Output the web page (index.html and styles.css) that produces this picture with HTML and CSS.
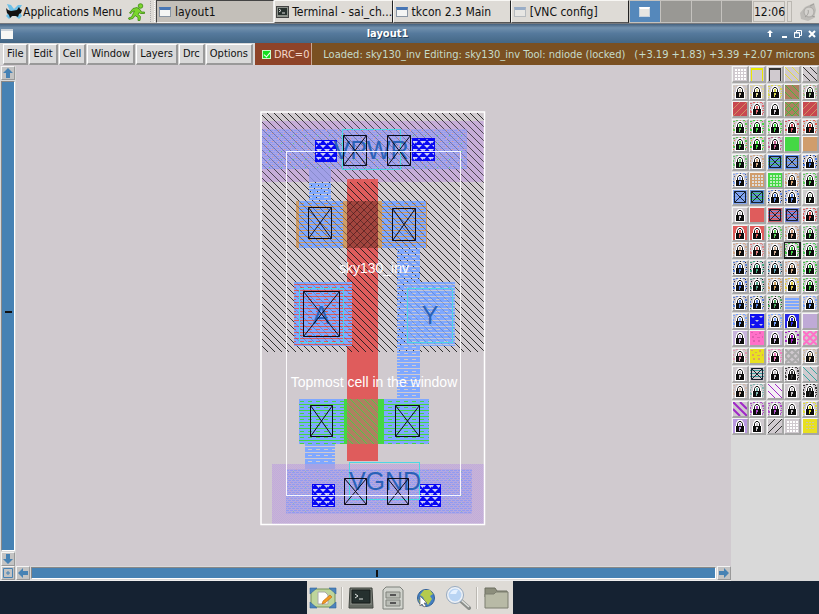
FILE: index.html
```html
<!DOCTYPE html>
<html lang="en">
<head>
<meta charset="utf-8">
<meta name="viewport" content="width=device-width, initial-scale=1">
<title>layout1</title>
<link rel="stylesheet" href="styles.css">
</head>
<body>
<header class="panel">
  <button class="apps" type="button">
    <svg class="apps-icon" viewBox="0 0 18 17" aria-hidden="true">
      <path d="M2 1l4 1 3 4 4-4 4 0-3 5 3 6-3 3-5-4-5 4-3-3 4-5z" fill="#6cc0e8"/>
      <path d="M1 5l2 2 3 1 6-1 2-3 1 2 2 1-1 3-2 1-1 3-2-1-4 0-2 2-1-3-2-2z" fill="#111"/>
    </svg>
    Applications Menu
  </button>
  <button class="runner" type="button" aria-label="Log out">
    <svg viewBox="0 0 18 18" aria-hidden="true">
      <circle cx="12.500" cy="3" r="2.300" fill="#7bd62c" stroke="#3d8a12" stroke-width=".8"/>
      <path d="M5 5.500l4-1 3 2 1.500 2.500 3 0v1.500l-4 0-1.500-1-1 2 2.500 2-.5 4h-2l0-3-3-2-2 3-4 1-.5-1.500 3-1 3-6-2 .5-1.500 2-1.500-.5z" fill="#7bd62c" stroke="#3d8a12" stroke-width=".8"/>
    </svg>
  </button>
  <span class="grip"></span>
  <nav class="tasks" aria-label="Windows">
    <button class="task task-active" type="button"><span class="win-icon"></span>layout1</button>
    <button class="task" type="button">
      <svg class="term-icon" viewBox="0 0 13 12" aria-hidden="true"><rect x=".5" y=".5" width="12" height="11" fill="#8c918a" stroke="#444"/><rect x="2" y="2" width="9" height="7" fill="#27302d"/><path d="M3 3l2 1.500-2 1.500M6 7h3" stroke="#ddd" fill="none"/></svg>
      Terminal - sai_ch...</button>
    <button class="task" type="button"><span class="win-icon"></span>tkcon 2.3 Main</button>
    <button class="task" type="button"><span class="win-icon win-faded"></span>[VNC config]</button>
  </nav>
  <div class="pager">
    <button class="desk desk-on" type="button" aria-label="Workspace 1"><span class="mini"></span></button>
    <button class="desk" type="button" aria-label="Workspace 2"></button>
    <button class="desk" type="button" aria-label="Workspace 3"></button>
    <button class="desk" type="button" aria-label="Workspace 4"></button>
  </div>
  <time class="clock">12:06</time>
  <span class="grip grip-end"></span>
  <svg class="tray" viewBox="0 0 20 20" aria-hidden="true">
    <path d="M2 11l5-6 9-4 2 7-2 8-6 3-7-2z" fill="#bebcb8"/>
    <circle cx="11" cy="10" r="5" fill="#d4d2ce" stroke="#aaa8a4"/><path d="M7 15c3-2 4-5 3-7M12 4l4-2M14 14l3 1" stroke="#9e9c99" fill="none"/>
  </svg>
</header>

<div class="titlebar">
  <span class="title-icon"></span>
  <h1 class="title">layout1</h1>
  <div class="win-buttons">
    <button type="button" aria-label="Shade"><svg viewBox="0 0 10 10"><path d="M5 1l3 3H6v4H4V4H2z" fill="#fff"/></svg></button>
    <button type="button" aria-label="Minimize"><svg viewBox="0 0 10 10"><path d="M3 7h5v2H3z" fill="#fff"/></svg></button>
    <button type="button" aria-label="Restore"><svg viewBox="0 0 10 10"><path d="M3.500 3V1.500h5v5H7M1.500 3.500h5v5h-5zM1 4h6" stroke="#fff" fill="none"/></svg></button>
    <button type="button" aria-label="Close"><svg viewBox="0 0 10 10"><path d="M2 2l6 6M8 2l-6 6" stroke="#fff" stroke-width="2"/></svg></button>
  </div>
</div>

<div class="menubar">
  <nav class="menus">
    <button type="button">File</button>
    <button type="button">Edit</button>
    <button type="button">Cell</button>
    <button type="button">Window</button>
    <button type="button">Layers</button>
    <button type="button">Drc</button>
    <button type="button">Options</button>
  </nav>
  <label class="drc"><input class="drc-box" type="checkbox" checked>DRC=0</label>
  <div class="status">
    <span>Loaded: sky130_inv Editing: sky130_inv Tool: ndiode (locked)</span>
    <span>(+3.19 +1.83) +3.39 +2.07 microns</span>
  </div>
</div>

<main class="work">
  <div class="vscroll">
    <button class="arrow" type="button" aria-label="Scroll up"><svg viewBox="0 0 12 12"><path d="M6 1l5 5H8v5H4V6H1z"/></svg></button>
    <div class="bar bar-v"><span class="tick tick-h"></span></div>
    <button class="arrow" type="button" aria-label="Scroll down"><svg viewBox="0 0 12 12"><path d="M6 11l5-5H8V1H4v5H1z"/></svg></button>
  </div>

  <svg class="layout" viewBox="16 66 715 500" role="img" aria-label="Inverter cell layout">
    <defs>
      <pattern id="well" width="7" height="7" patternUnits="userSpaceOnUse"><path d="M-1-1l9 9M-1 6l2 2M6-1l2 2" stroke="#1c1c1c" stroke-width=".9"/></pattern>
      <pattern id="back" width="7" height="7" patternUnits="userSpaceOnUse"><path d="M-1 8l9-9M-1 1l2-2M6 8l2-2" stroke="#6a2222"/></pattern>
      <pattern id="greenhatch" width="7" height="7" patternUnits="userSpaceOnUse"><path d="M-1-1l9 9M-1 6l2 2M6-1l2 2" stroke="#45d045" stroke-width=".9"/></pattern>
      <pattern id="li" width="8" height="6" patternUnits="userSpaceOnUse"><path d="M0 0h8v2h-3v1h3v2H4v1H0V5h0V3h5V2H0zM0 3h8v2H0z" fill="#7fa8ff"/></pattern>
      <pattern id="rail" width="4" height="4" patternUnits="userSpaceOnUse"><path d="M0 .5h3M2 2.500h2M0 2.500h1" stroke="#7d93fb"/></pattern>
      <pattern id="metal" width="2" height="2" patternUnits="userSpaceOnUse"><path d="M0 0h1v1H0zM1 1h1v1H1z" fill="#b78ee0"/></pattern>
      <pattern id="specks" width="12" height="8" patternUnits="userSpaceOnUse"><path d="M2 2h1v1H2zM8 5h1v1H8z" fill="#e49a90"/><path d="M5 7h1v1H5z" fill="#62cc74"/></pattern>
      <pattern id="via" width="8" height="8" patternUnits="userSpaceOnUse"><rect width="8" height="8" fill="#0808f4"/><path d="M0 1h6L3 4zM4 5h5L6.500 8zM-1 5h3l-2.500 3z" fill="#d0d0f4"/></pattern>
    </defs>

    <!-- n-well and power rail -->
    <rect x="262" y="121" width="222" height="61" fill="#bf98e0" opacity=".55"/>
    <rect x="262" y="129" width="205" height="40" fill="#9ba0ef" opacity=".6"/>
    <rect x="262" y="129" width="205" height="40" fill="url(#rail)" opacity=".6"/>
    <rect x="262" y="113" width="222" height="8" fill="url(#well)"/>
    <rect x="262" y="121" width="222" height="8" fill="url(#well)" opacity=".8"/>
    <rect x="262" y="129" width="205" height="40" fill="url(#well)" opacity=".35"/>
    <rect x="467" y="129" width="17" height="40" fill="url(#well)" opacity=".8"/>
    <rect x="262" y="169" width="222" height="13" fill="url(#well)" opacity=".8"/>
    <rect x="262" y="182" width="222" height="170" fill="url(#well)"/>
    <rect x="262" y="129" width="205" height="40" fill="url(#specks)"/>
    <rect x="309" y="182" width="22" height="19" fill="url(#li)"/>
    <rect x="309" y="169" width="22" height="13" fill="#979ceb" opacity=".8"/>

    <!-- input gate -->
    <rect x="347" y="179" width="31" height="282" fill="#df5c5c"/>
    <rect x="347" y="182" width="31" height="170" fill="url(#well)"/>

    <!-- p-diffusion -->
    <rect x="296" y="201" width="51" height="47" fill="#d09d67"/>
    <rect x="378" y="201" width="49" height="47" fill="#d09d67"/>
    <rect x="299" y="201" width="44" height="47" fill="url(#li)"/>
    <rect x="382" y="201" width="44" height="47" fill="url(#li)"/>
    <rect x="347" y="201" width="31" height="47" fill="#a2453e"/>
    <rect x="347" y="201" width="31" height="47" fill="url(#back)"/>
    <rect x="296" y="201" width="131" height="47" fill="url(#well)" opacity=".5"/>

    <!-- output strap and ports -->
    <rect x="397" y="248" width="23" height="152" fill="url(#li)"/>
    <rect x="294" y="282" width="58" height="64" fill="#df5c5c"/>
    <rect x="294" y="282" width="58" height="64" fill="url(#li)"/>
    <rect x="406" y="282" width="49" height="64" fill="#c3c6d8"/>
    <rect x="406" y="282" width="49" height="64" fill="url(#li)"/>
    <rect x="294" y="282" width="58" height="64" fill="url(#well)" opacity=".25"/>
    <rect x="397" y="248" width="58" height="98" fill="url(#well)" opacity=".2"/>

    <!-- n-diffusion -->
    <rect x="299" y="399" width="130" height="45" fill="#43d843"/>
    <rect x="299" y="399" width="45" height="45" fill="url(#li)"/>
    <rect x="384" y="399" width="45" height="45" fill="url(#li)"/>
    <rect x="347" y="399" width="31" height="45" fill="#ae8060"/>
    <rect x="347" y="399" width="31" height="45" fill="url(#greenhatch)"/>

    <!-- ground rail -->
    <rect x="305" y="444" width="30" height="20" fill="url(#li)"/>
    <rect x="272" y="464" width="212" height="60" fill="#c4b0d8" opacity=".8"/>
    <rect x="272" y="464" width="212" height="60" fill="url(#metal)" opacity=".3"/>
    <rect x="286" y="469" width="186" height="45" fill="#a6a2e6" opacity=".6"/>
    <rect x="286" y="469" width="186" height="45" fill="url(#rail)" opacity=".6"/>
    <rect x="286" y="469" width="186" height="45" fill="url(#specks)" opacity=".4"/>
    <rect x="305" y="464" width="30" height="5" fill="#979ceb" opacity=".7"/>

    <!-- metal contacts -->
    <g fill="url(#via)" stroke="#0808f4">
      <rect x="315.500" y="140.500" width="21" height="21"/>
      <rect x="412.500" y="138.500" width="22" height="22"/>
      <rect x="312.500" y="484.500" width="22" height="22"/>
      <rect x="419.500" y="484.500" width="21" height="22"/>
    </g>

    <!-- port outlines -->
    <g fill="none" stroke="#4ed6e4">
      <rect x="342.500" y="129.500" width="58" height="40"/>
      <rect x="299.500" y="288.500" width="44" height="54"/>
      <rect x="407.500" y="288.500" width="45" height="54"/>
      <rect x="349.500" y="462.500" width="70" height="37"/>
    </g>

    <g class="port-text">
      <text x="371" y="159">VPWR</text>
      <text x="321" y="324">A</text>
      <text x="430" y="324">Y</text>
      <text x="385" y="490">VGND</text>
    </g>

    <g fill="none" stroke="#0b0b18">
      <path d="M343.500 135.500h23v30h-23zl23 30m0-30l-23 30"/>
      <path d="M387.500 135.500h23v30h-23zl23 30m0-30l-23 30"/>
      <path d="M308.500 207.500h23v31h-23zl23 31m0-31l-23 31"/>
      <path d="M392.500 208.500h23v32h-23zl23 32m0-32l-23 32"/>
      <path d="M303.500 291.500h36v45h-36zl36 45m0-45l-36 45"/>
      <path d="M310.500 405.500h22v31h-22zl22 31m0-31l-22 31"/>
      <path d="M395.500 405.500h24v31h-24zl24 31m0-31l-24 31"/>
      <path d="M344.500 478.500h22v26h-22zl22 26m0-26l-22 26"/>
      <path d="M387.500 478.500h21v26h-21zl21 26m0-26l-21 26"/>
    </g>

    <rect x="286.500" y="151.500" width="174" height="344" fill="none" stroke="#fff" opacity=".9"/>
    <rect x="261" y="112" width="223.500" height="412.500" fill="none" stroke="#fff" stroke-width="1.500"/>
    <g class="cell-text">
      <text x="374" y="273">sky130_inv</text>
      <text x="374" y="387">Topmost cell in the window</text>
    </g>
  </svg>

  <aside class="side" aria-label="Layers"><div class="palette" id="palette"></div></aside>

  <div class="hscroll">
    <button class="arrow" type="button" aria-label="Fit view"><svg viewBox="0 0 12 12"><path d="M1.500 1.500h9v9h-9zM5 5h2v2H5z" class="arrow-line"/></svg></button>
    <button class="arrow" type="button" aria-label="Scroll left"><svg viewBox="0 0 12 12"><path d="M1 6l5-5v3h5v4H6v3z"/></svg></button>
    <div class="bar bar-h"><span class="tick tick-v"></span></div>
    <button class="arrow" type="button" aria-label="Scroll right"><svg viewBox="0 0 12 12"><path d="M11 6L6 1v3H1v4h5v3z"/></svg></button>
  </div>
</main>

<footer class="desktop">
  <nav class="dock" aria-label="Launchers">
    <button type="button" aria-label="Show desktop"><svg viewBox="0 0 28 24"><rect x="2" y="3" width="24" height="18" rx="3" fill="#bed59c" stroke="#75905b"/><path d="M1 2h7L1 8zM27 2h-7l7 6zM1 22h7l-7-6zM27 22h-7l7-6z" fill="#4d83bd" stroke="#31659c" stroke-width=".6"/><path d="M9 6h7l3 3v9H9z" fill="#fff" stroke="#aaa"/><path d="M14 15l7-6 2 2-7 6-3 1z" fill="#f39a20" stroke="#ba6511" stroke-width=".6"/></svg></button>
    <span class="dock-sep"></span>
    <button type="button" aria-label="Terminal"><svg viewBox="0 0 28 24"><path d="M3 2h22l1 20H2z" fill="#777c75" stroke="#3e423d"/><path d="M5 4h18v13H5z" fill="#26312f" stroke="#161c1a"/><path d="M8 8l3 2-3 2M12 13h4" fill="none" stroke="#e2e6e2"/><path d="M3 20h22" stroke="#555a53"/></svg></button>
    <button type="button" aria-label="File manager"><svg viewBox="0 0 28 24"><path d="M7 1h14l3 3v19H4V4z" fill="#d2d4ce" stroke="#7d807a"/><path d="M7 6h14v6H7zM7 14h14v6H7z" fill="#babdb6" stroke="#80837c"/><path d="M11 9h6M11 17h6" stroke="#555" stroke-width="2"/></svg></button>
    <button type="button" aria-label="Web browser"><svg viewBox="0 0 28 24"><circle cx="14" cy="12" r="8.500" fill="#4380c4" stroke="#315f94"/><path d="M12 4l6 0 3 4-3 2 2 3-4 6-3-4-2-4-3-2zM6 13l4 3-1 3z" fill="#b4cb4d"/><path d="M8 10v10l2-2 2 3 2-1-2-3h3z" fill="#fff" stroke="#666" stroke-width=".7"/></svg></button>
    <button type="button" aria-label="Search"><svg viewBox="0 0 28 24"><path d="M16 14l9 8" stroke="#8b8e8a" stroke-width="4" stroke-linecap="round"/><path d="M17 14l8 7" stroke="#e0e2df" stroke-width="1.500"/><circle cx="11" cy="9" r="7.500" fill="#b9d4f3" stroke="#eef1f5" stroke-width="2"/><circle cx="11" cy="9" r="8.500" fill="none" stroke="#8199b5" stroke-width=".8"/><path d="M6 8c1-4 5-5 8-4l-2 4z" fill="#e5f1ff"/></svg></button>
    <span class="dock-sep"></span>
    <button type="button" aria-label="Home folder"><svg viewBox="0 0 28 24"><path d="M3 2h10l2 3h10v6H3z" fill="#8c8e7c" stroke="#6c6e60"/><path d="M3 8h9l2-2h12v16H3z" fill="#b8baa6" stroke="#7d7f70"/></svg></button>
  </nav>
</footer>
<script src="palette.js"></script>
</body>
</html>
```
FILE: styles.css
```css
* { box-sizing: border-box; }

body {
  margin: 0;
  height: 100vh;
  display: flex;
  flex-direction: column;
  overflow: hidden;
  background: #152232;
  color: #111;
  font: 12px/16px "DejaVu Sans Condensed", "DejaVu Sans", sans-serif;
}

button {
  margin: 0;
  padding: 0;
  border: 0;
  background: none;
  color: inherit;
  font: inherit;
}

svg { display: block; }

/* top panel */
.panel {
  flex: none;
  display: flex;
  align-items: stretch;
  height: 24px;
  background: #dedbd6;
  border-bottom: 1px solid #77797d;
}
.apps { display: flex; align-items: center; width: 126px; padding-left: 5px; white-space: nowrap; }
.apps-icon { flex: none; width: 18px; height: 17px; }
.runner { display: flex; align-items: center; width: 24px; padding-left: 2px; }
.runner svg { width: 18px; height: 18px; }
.grip { width: 5px; margin: 1px 1px 1px 0; border-left: 1px dotted #aaa; border-right: 1px dotted #fff; }
.tasks { flex: 1; display: flex; min-width: 0; }
.task {
  flex: 1;
  min-width: 0;
  display: flex;
  align-items: center;
  gap: 3px;
  padding-left: 1px;
  overflow: hidden;
  white-space: nowrap;
  border: 1px solid #f8f7f4;
  border-right-color: #222;
  border-bottom-color: #555;
  background: #dedbd6;
}
.task-active { background: #c3bfb9; border-color: #444 #eee #eee #444; }
.win-icon { flex: none; width: 12px; height: 10px; margin: 0 1px; background: #f4f5f4; border: 1px solid #8a96a4; border-top: 3px solid #4776b5; }
.win-faded { opacity: .45; }
.term-icon { flex: none; width: 13px; height: 12px; }
.pager { flex: none; display: flex; gap: 1px; width: 123px; padding: 1px 0 1px 1px; background: #c4c2be; }
.desk { flex: 1; background: #999894; }
.desk-on { display: flex; align-items: center; justify-content: center; background: #5588bb; }
.mini { width: 11px; height: 10px; background: #e7e6e2; border: 1px solid #c5d2df; border-top: 2px solid #fff; }
.clock { flex: none; width: 32px; margin: 1px; border: 1px solid #bbb8b2; text-align: center; line-height: 20px; white-space: nowrap; }
.grip-end { width: 5px; margin: 1px; border: 1px solid #bbb8b2; }
.tray { flex: none; width: 26px; height: 20px; padding-left: 4px; align-self: center; }

/* window title */
.titlebar {
  flex: none;
  display: grid;
  grid-template-columns: 1fr auto 1fr;
  align-items: center;
  height: 19px;
  background: linear-gradient(#45617e, #7190ad 20%, #55799c 50%, #446785);
  color: #fff;
}
.title-icon { width: 12px; height: 10px; margin-left: 1px; background: #f8f8f5; border-top: 2px solid #cbd3da; }
.title { margin: 0; padding-right: 44px; font: bold 11px/16px "DejaVu Sans Condensed", "DejaVu Sans", sans-serif; text-shadow: 1px 1px 0 #26415c; }
.win-buttons { display: flex; justify-content: flex-end; gap: 4px; padding-right: 2px; }
.win-buttons svg { width: 10px; height: 10px; }

/* menu row */
.menubar { flex: none; display: flex; height: 23px; background: #d9d9d9; font-size: 11px; border-bottom: 1px solid #d0cacf; }
.menus { display: flex; gap: 1px; padding: 1px 2px 0 3px; }
.menus button { padding: 0 3px; border: 1px solid #fff; border-right: 2px solid #999; border-bottom: 2px solid #999; background: #d9d9d9; line-height: 18px; }
.drc { display: flex; align-items: center; gap: 3px; width: 57px; padding: 1px 0 0 7px; background: #8e4328; color: #f4d7c8; white-space: nowrap; border-right: 1px solid #c9a692; }
.drc-box { appearance: none; flex: none; width: 9px; height: 9px; margin: 0; background: #16df21; border: 1px solid #c8ffc8; position: relative; }
.drc-box:checked::after { content: ""; position: absolute; left: 2px; top: 0; width: 3px; height: 5px; border: solid #fff; border-width: 0 1px 1px 0; transform: rotate(40deg); }
.status { flex: 1; display: flex; align-items: center; justify-content: flex-end; gap: 9px; padding: 1px 4px 0 0; background: #7a5022; color: #c6dccb; white-space: nowrap; overflow: hidden; }

/* work area */
.work {
  flex: 1;
  min-height: 0;
  display: grid;
  grid-template-columns: 16px minmax(0, 1fr) 88px;
  grid-template-rows: minmax(0, 1fr) 15px;
  background: #d0cacf;
}
.vscroll { display: flex; flex-direction: column; background: #d9d9d9; padding-left: 1px; }
.hscroll { grid-column: 1 / 3; grid-row: 2; display: flex; gap: 1px; background: #d9d9d9; padding-left: 1px; border-bottom: 1px solid #eee; }
.arrow { flex: none; width: 14px; height: 14px; border: 1px solid #f4f4f4; border-right-color: #999; border-bottom-color: #999; background: #c3c3c3; }
.arrow svg { width: 12px; height: 12px; fill: #4682b4; }
.arrow .arrow-line { fill: none; stroke: #4682b4; stroke-width: 1; }
.bar { flex: 1; display: flex; align-items: center; justify-content: center; background: #4682b4; border: 1px solid #888; border-right-color: #fff; border-bottom-color: #fff; }
.bar-v { margin: 1px 1px 1px 0; padding-bottom: 8px; }
.bar-h { margin: 1px 0; padding-left: 6px; }
.tick { background: #111; }
.tick-h { width: 7px; height: 2px; }
.tick-v { width: 2px; height: 7px; }
.layout { width: 100%; height: 100%; }
.port-text { font: 25px "Liberation Sans", sans-serif; fill: #2a62b8; text-anchor: middle; }
.cell-text { font: 14px "Liberation Sans", sans-serif; fill: #fff; text-anchor: middle; }

.side { grid-column: 3; grid-row: 1 / 3; background: #d9d9d9; }
.palette { display: grid; grid-template-columns: repeat(5, 1fr); grid-template-rows: repeat(21, 1fr); height: 370px; padding-left: 1px; }
.swatch { width: 17px; height: 17px; border: 1px solid #f4f4f4; border-right: 2px solid #a6a6a6; border-bottom: 2px solid #a6a6a6; background: #d0cacf; }
.swatch svg { width: 14px; height: 14px; }
.swatch-on { border-color: #222; }

/* launcher dock */
.desktop { flex: none; display: flex; justify-content: center; height: 33px; }
.dock { display: flex; align-items: center; justify-content: space-between; width: 206px; padding: 0 2px; background: #dedbd6; }
.dock svg { width: 28px; height: 24px; }
.dock-sep { width: 2px; height: 22px; border-left: 1px solid #bbb8b2; border-right: 1px solid #f6f5f2; }
```
FILE: palette.js
```js
// Each entry is "kind color [second color]"; "lock" swatches carry a padlock.
const rows = [
  ["dots #fff", "frame #e8e800", "frame #333", "back #e4dc3c", "back #333"],
  ["lock #cfc4b0", "lock #e0d890", "lock #d8d850", "back #46b840 #ad8060", "lock #9ec090 #c88c70"],
  ["fwd #d09060 #c84850", "lock #e06870", "lock #d0cacf", "cross #46b840 #ad8060", "fwd #d09060 #c84850"],
  ["lock #60c850 #d0a070", "lock #44d844 #c07070", "lock #44d844 #88c060", "lock #d05060 #d0b080", "lock #e06050 #d09a60"],
  ["lock #58c050 #e08838", "lock #38d838 #d8c030", "lock #c06090 #a0b8a0", "solid #44d844", "solid #d09d6c"],
  ["lock #68c870", "lock #d0a880", "box #44c060 #6090e0", "box #a09888 #7098f0", "lock #5080e0 #222"],
  ["lock #88aaf0 #4060a0", "dots #ddd #d09d6c", "dots #c0f0c0 #44d844", "lock #d0a070", "lock #58cc58"],
  ["box #7098f0 #88a8f0", "box #40c868 #6090d8", "lock #6088e0 #222", "lock #6088e0 #334", "lock #c8d8c8"],
  ["lock #d0cacf", "solid #df5c5c", "box #7888e0 #d06070", "box #d06070 #7888e0", "lock #df5c5c"],
  ["lockfill #df5c5c", "lockfill #df5c5c", "lock #60d060", "lock #d0a080", "lock #68cc70"],
  ["lock #d0a888", "lock #df8080", "lock #d0b098", "lock #44c844 on", "lock #48c858"],
  ["lock #6088d8 #223", "lock #40a880 #223", "lock #60a0b0 #223", "lock #d0a888", "lock #40c848"],
  ["lock #5078e0 #223", "lock #50a088 #223", "lock #d0a060", "lock #e0c840", "lock #48c848"],
  ["lock #5880d8 #666", "lock #5880d8 #363", "lock #50a860 #333", "dash #7ba6ff", "lock #7ba6ff"],
  ["lock #7ba6ff", "via #ccd #1010f0", "lock #7ba6ff", "lockfill #2828e8", "solid #bfaad6"],
  ["lockfill #c8b4dc", "mottle #e060b0 #ff70c8", "lockfill #c8b4dc", "lock #a020c0 #c8b4dc", "rings #ff70c8"],
  ["lock #e098b0 #d0c090", "mottle #e0a060 #e8e020", "lock #f080c0", "rings #aaa", "lock #d0b898"],
  ["lock #c8c4c8", "box #40a0a0 #d0cacf", "lock #c8c4c8", "lock #444", "back #38a8a0"],
  ["lock #d0b8a8", "lock #80b8b0", "back #a028c8 #f4f0f4", "lock #c8c4c8", "lock #333"],
  ["bold #a028c8", "lock #b050c8", "lock #b050c8", "lock #c8c4c8", "lock #e0e030"],
  ["lockfill #b898e0", "lock #d0cacf", "fwd #333", "dots #fff", "grid #e8e020"]
];

const lock = (tint) =>
  `<path d="M2 14V7h1V4l2-3h4l2 3v3h1v7z" fill="#fff"/>
   <path d="M4.500 7V4.500l1.500-2h2l1.500 2V7" fill="none" stroke="#111"/>
   <path d="M6 4h2v3H6z" fill="${tint}"/>
   <path d="M3 7h8v6H3z" fill="#0c0c0c"/><path d="M6 8h2v2H7v2H6z" fill="${tint}"/>`;

const specks = (a, b) =>
  `<path d="M0 1h2v1H0zM3 0h2v1H3zM10 0h2v1h-2zM12 3h2v2h-2zM0 5h1v2H0zM0 9h2v2H0zM12 8h2v1h-2zM12 11h1v2h-1z" fill="${a}"/>
   <path d="M1 3h1v1H1zM7 0h1v1H7zM12 1h1v1h-1zM0 8h1v1H0zM13 6h1v1h-1zM0 12h1v1H0zM13 10h1v1h-1z" fill="${b}"/>`;

const line = (d, c, w = 1) => `<path d="${d}" fill="none" stroke="${c}" stroke-width="${w}"/>`;
const square = (c) => `<path d="M0 0h14v14H0z" fill="${c}"/>`;
const falling = "M0 7l7 7M0 0l14 14M7 0l7 7";
const rising = "M0 7l7-7M0 14L14 0M7 14l7-7";

const art = {
  lock: (a, b) => specks(a, b || a) + lock(a),
  lockfill: (a) => square(a) + lock(a),
  solid: (a) => square(a),
  dots: (a) => [2, 5, 8, 11].map((y) => `<path d="M2 ${y}h2v2H2zM5 ${y}h2v2H5zM8 ${y}h2v2H8zM11 ${y}h2v2h-2z" fill="${a}"/>`).join(""),
  grid: (a) => square(a) + [3, 6, 9].map((y) => `<path d="M3 ${y}h2v1H3zM6 ${y}h2v1H6zM9 ${y}h2v1H9z" fill="#c9c5b0"/>`).join(""),
  frame: (a) => `<path d="M1 1h12v13h-1V3H2v11H1z" fill="${a}"/>`,
  back: (a) => line(falling, a),
  bold: (a) => line(falling, a, 2),
  fwd: (a) => line(rising, a),
  cross: (a) => line(falling + rising, a),
  box: (a) => line("M0 3.500h14M0 6.500h14M0 9.500h14", a) + line("M1.500 1.500h11v11h-11zl11 11m0-11l-11 11", "#16202e"),
  dash: (a) => line("M0 3h14M0 6h14M0 9h14M0 12h14", a, 2),
  via: (a) => `<path d="M1 2h4L3 4zM9 2h4l-2 2zM5 6h4L7 8zM1 10h4l-2 2zM9 10h4l-2 2z" fill="${a}"/>`,
  mottle: (a) => `<path d="M1 1h2v1H1zM5 3h2v1H5zM9 1h2v2H9zM2 5h2v2H2zM7 6h3v1H7zM3 9h2v2H3zM8 9h2v2H8zM12 5h1v2h-1z" fill="${a}"/>`,
  rings: (a) => line(falling + rising, a, 2)
};

const palette = document.getElementById("palette");
rows.flat().forEach((entry, i) => {
  const [kind, a, b] = entry.split(" ");
  const second = b === "on" ? undefined : b;
  const button = document.createElement("button");
  button.type = "button";
  button.className = b === "on" ? "swatch swatch-on" : "swatch";
  button.setAttribute("aria-label", "Layer " + (i + 1));
  const ground = second && !kind.startsWith("lock") ? square(second) : "";
  button.innerHTML = `<svg viewBox="0 0 14 14" aria-hidden="true">${ground}${art[kind](a, second)}</svg>`;
  palette.append(button);
});
```
